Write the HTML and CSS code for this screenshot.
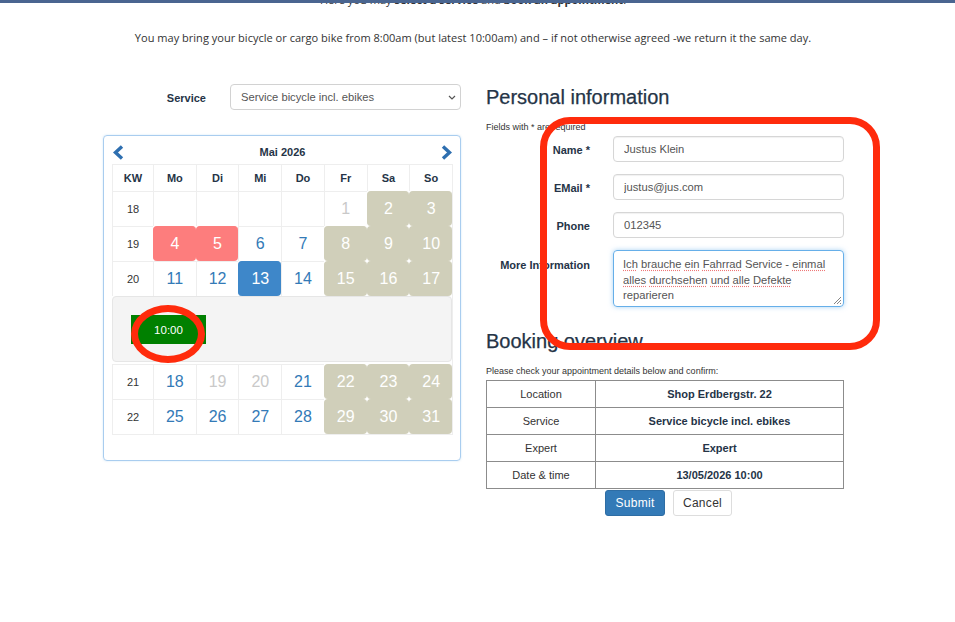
FILE: index.html
```html
<!DOCTYPE html>
<html lang="en">
<head>
<meta charset="utf-8">
<title>Book an appointment</title>
<link rel="stylesheet" href="styles.css">
</head>
<body>
<div class="topbar"></div>
<header class="intro">
  <p class="lead">Here you may <b>select a service</b> and <b>book an appointment</b>.</p>
  <p class="note">You may bring your bicycle or cargo bike from 8:00am (but latest 10:00am) and – if not otherwise agreed -we return it the same day.</p>
</header>
<main class="main">
  <section class="left">
    <div class="service-row">
      <span class="service-label">Service</span>
      <div class="select">Service bicycle incl. ebikes
        <svg class="caret" viewBox="0 0 8 5" width="8" height="5"><polyline points="1,1 4,4 7,1" fill="none" stroke="#555" stroke-width="1.2"/></svg>
      </div>
    </div>
    <div class="calendar">
      <div class="cal-nav">
        <svg class="chev" viewBox="0 0 12 15" width="12" height="15"><polyline points="10,1.5 3.5,7.5 10,13.5" fill="none" stroke="#2e6fb0" stroke-width="3.4"/></svg>
        <span class="cal-title">Mai 2026</span>
        <svg class="chev" viewBox="0 0 12 15" width="12" height="15"><polyline points="2,1.5 8.5,7.5 2,13.5" fill="none" stroke="#2e6fb0" stroke-width="3.4"/></svg>
      </div>
      <div class="cal-grid">
        <div class="cell hd">KW</div><div class="cell hd">Mo</div><div class="cell hd">Di</div><div class="cell hd">Mi</div><div class="cell hd">Do</div><div class="cell hd">Fr</div><div class="cell hd">Sa</div><div class="cell hd">So</div>

        <div class="cell kw">18</div><div class="cell"></div><div class="cell"></div><div class="cell"></div><div class="cell"></div><div class="cell off">1</div><div class="cell we">2</div><div class="cell we">3</div>

        <div class="cell kw">19</div><div class="cell blocked">4</div><div class="cell blocked">5</div><div class="cell">6</div><div class="cell">7</div><div class="cell we">8</div><div class="cell we">9</div><div class="cell we">10</div>

        <div class="cell kw">20</div><div class="cell">11</div><div class="cell">12</div><div class="cell sel">13</div><div class="cell">14</div><div class="cell we">15</div><div class="cell we">16</div><div class="cell we">17</div>

        <div class="slots"><button class="slot" type="button">10:00</button></div>

        <div class="cell kw">21</div><div class="cell">18</div><div class="cell off">19</div><div class="cell off">20</div><div class="cell">21</div><div class="cell we">22</div><div class="cell we">23</div><div class="cell we">24</div>

        <div class="cell kw">22</div><div class="cell">25</div><div class="cell">26</div><div class="cell">27</div><div class="cell">28</div><div class="cell we">29</div><div class="cell we">30</div><div class="cell we">31</div>
      </div>
      <div class="ellipse"></div>
    </div>
  </section>

  <section class="right">
    <h2 class="title">Personal information</h2>
    <p class="small req">Fields with * are required</p>
    <div class="form">
      <div class="form-row"><label class="flabel">Name *</label><input class="input" type="text" value="Justus Klein"></div>
      <div class="form-row"><label class="flabel">EMail *</label><input class="input" type="text" value="justus@jus.com"></div>
      <div class="form-row"><label class="flabel">Phone</label><input class="input" type="text" value="012345"></div>
      <div class="form-row top"><label class="flabel">More Information</label>
        <div class="textarea" role="textbox"><span class="sp">Ich</span> <span class="sp">brauche</span> <span class="sp">ein</span> <span class="sp">Fahrrad</span> Service - <span class="sp">einmal</span><br><span class="sp">alles</span> <span class="sp">durchsehen</span> <span class="sp">und</span> <span class="sp">alle</span> <span class="sp">Defekte</span><br>reparieren
          <svg class="grip" viewBox="0 0 10 10" width="10" height="10"><path d="M9 2 L2 9 M9 5 L5 9 M9 8 L8 9" stroke="#777" stroke-width="0.9" fill="none"/></svg>
        </div>
      </div>
    </div>
    <h2 class="title booking">Booking overview</h2>
    <p class="small check">Please check your appointment details below and confirm:</p>
    <table class="overview">
      <tr><td class="k">Location</td><td class="v">Shop Erdbergstr. 22</td></tr>
      <tr><td class="k">Service</td><td class="v">Service bicycle incl. ebikes</td></tr>
      <tr><td class="k">Expert</td><td class="v">Expert</td></tr>
      <tr><td class="k">Date &amp; time</td><td class="v">13/05/2026 10:00</td></tr>
    </table>
    <div class="actions">
      <button class="btn primary" type="button">Submit</button>
      <button class="btn" type="button">Cancel</button>
    </div>
    <div class="redbox"></div>
  </section>
</main>
</body>
</html>
```

FILE: styles.css
```css
html, body {
  margin: 0;
  background: #fff;
}
body {
  font-family: "Liberation Sans", Arial, sans-serif;
  color: #253447;
  overflow: hidden;
}
.topbar {
  position: fixed;
  top: 0;
  left: 0;
  right: 0;
  height: 3px;
  background: #4a6590;
  z-index: 5;
}
.intro {
  text-align: center;
  font-family: "Open Sans", sans-serif;
  color: #333;
  font-size: 11.05px;
  line-height: 18px;
  padding-right: 9px;
}
.intro p { margin: 0; }
.lead { margin-top: -9px !important; }
.note { margin-top: 20px !important; }

.main {
  display: flex;
  align-items: flex-start;
  gap: 25px;
  padding-left: 103px;
  margin-top: 37px;
}
.left { width: 358px; }
.service-row {
  display: flex;
  justify-content: flex-end;
  align-items: center;
  gap: 24px;
  height: 26px;
}
.service-label {
  font-weight: bold;
  font-size: 11px;
  padding-top: 2px;
}
.select {
  position: relative;
  width: 231px;
  height: 26px;
  box-sizing: border-box;
  border: 1px solid #d2d2d2;
  border-radius: 4px;
  padding: 0 10px;
  font-size: 11.2px;
  line-height: 24px;
  color: #555;
}
.caret {
  position: absolute;
  right: 4px;
  top: 10px;
}

.calendar {
  position: relative;
  margin-top: 25px;
  border: 1px solid #a9cdef;
  border-radius: 4px;
  box-shadow: 0 0 2px rgba(102, 175, 233, 0.35);
  padding: 0 7px 25px 8px;
}
.cal-nav {
  height: 24px;
  padding-top: 4px;
  display: flex;
  align-items: center;
  justify-content: space-between;
}
.cal-title {
  font-weight: bold;
  font-size: 11px;
}
.cal-grid {
  display: grid;
  grid-template-columns: 41px repeat(7, 1fr);
  grid-template-rows: 27px repeat(3, 35px) 68px repeat(2, 35px);
  border-bottom: 1px solid #eee;
  border-right: 1px solid #eee;
}
.cell {
  display: flex;
  align-items: center;
  justify-content: center;
  box-sizing: border-box;
  border-top: 1px solid #eee;
  border-left: 1px solid #eee;
  font-size: 16px;
  color: #337ab7;
}
.hd {
  font-size: 11px;
  font-weight: bold;
  color: #253447;
}
.kw {
  font-size: 11px;
  color: #333;
}
.off { color: #c9c9c9; }
.we {
  background: #d0cfba;
  border-color: #d0cfba;
  color: #fff;
  border-radius: 4px;
}
.blocked {
  background: #fd7d7d;
  border-color: #fd7d7d;
  color: #fff;
  border-radius: 4px;
}
.sel {
  background: #3e87c9;
  border-color: #3e87c9;
  color: #fff;
  border-radius: 4px;
}
.slots {
  grid-column: 1 / -1;
  margin-bottom: 2px;
  background: #f4f4f4;
  border: 1px solid #e6e6e6;
  border-radius: 4px;
  padding: 18px;
  box-sizing: border-box;
}
.slot {
  display: block;
  width: 75px;
  height: 29px;
  padding: 0;
  border: 0;
  border-radius: 0;
  background: #008000;
  color: #fff;
  font-family: "Liberation Sans", Arial, sans-serif;
  font-size: 11.5px;
}
.ellipse {
  position: absolute;
  left: 27px;
  top: 169px;
  width: 74px;
  height: 58px;
  box-sizing: border-box;
  border: 7px solid #ff2b0c;
  border-radius: 50%;
}

.right {
  position: relative;
  width: 358px;
  padding-top: 1px;
}
.title {
  margin: 0;
  font-size: 20px;
  line-height: 24px;
  font-weight: normal;
  color: #253447;
  -webkit-text-stroke: 0.25px #253447;
}
.small {
  margin: 12px 0 0;
  font-size: 9px;
  line-height: 12px;
  color: #333;
}
.form { margin-top: 3px; }
.form-row {
  display: flex;
  align-items: center;
  gap: 23px;
  margin-bottom: 12px;
}
.form-row.top {
  align-items: flex-start;
  margin-bottom: 0;
}
.flabel {
  width: 104px;
  text-align: right;
  font-weight: bold;
  font-size: 11px;
  line-height: 13px;
  padding-top: 2px;
}
.form-row.top .flabel { padding-top: 9px; }
.input {
  width: 231px;
  height: 26px;
  box-sizing: border-box;
  border: 1px solid #d6d6d6;
  border-radius: 4px;
  box-shadow: inset 0 1px 1px rgba(0, 0, 0, 0.06);
  padding: 0 10px;
  font-family: "Liberation Sans", Arial, sans-serif;
  font-size: 11.2px;
  color: #555;
  margin: 0;
}
.textarea {
  position: relative;
  width: 231px;
  height: 57px;
  box-sizing: border-box;
  border: 1px solid #66afe9;
  border-radius: 4px;
  box-shadow: 0 0 5px rgba(102, 175, 233, 0.55);
  padding: 6px 9px;
  font-size: 11.2px;
  line-height: 15.5px;
  color: #555;
}
.sp {
  text-decoration: underline dotted #e77;
  text-underline-offset: 2px;
}
.grip {
  position: absolute;
  right: 1px;
  bottom: 1px;
}
.booking { margin-top: 22px; }
.check { margin-top: 12px; }
.overview {
  margin-top: 3px;
  width: 358px;
  border-collapse: collapse;
  font-size: 11px;
}
.overview td {
  border: 1px solid #8c8c8c;
  height: 26px;
  padding: 0;
  text-align: center;
}
.overview .k {
  width: 108px;
  color: #333;
}
.overview .v {
  font-weight: bold;
  color: #253447;
}
.actions {
  display: flex;
  justify-content: center;
  gap: 8px;
  margin-top: 1px;
  padding-left: 7px;
}
.btn {
  height: 26px;
  width: 59px;
  padding: 0;
  border: 1px solid #ddd;
  border-radius: 3px;
  background: #fff;
  color: #333;
  font-family: "Liberation Sans", Arial, sans-serif;
  font-size: 12px;
  letter-spacing: 0.3px;
}
.btn.primary {
  width: 60px;
  background: #337ab7;
  border-color: #2e6da4;
  color: #fff;
}
.redbox {
  position: absolute;
  left: 54px;
  top: 33px;
  width: 340px;
  height: 233px;
  box-sizing: border-box;
  border: 7px solid #ff2b0c;
  border-radius: 30px;
}
```
